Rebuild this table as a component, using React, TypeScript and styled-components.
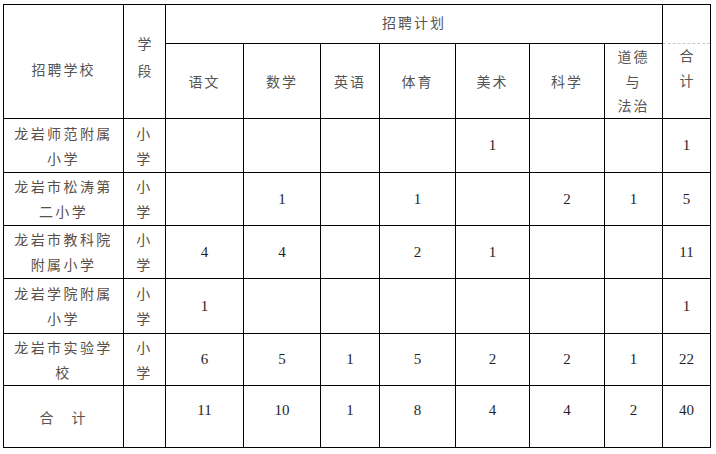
import React from 'react';
import styled, { createGlobalStyle } from 'styled-components';

const GlobalStyle = createGlobalStyle`
  html, body {
    margin: 0;
    padding: 0;
    background: #ffffff;
  }
`;

type Row = {
  school: string[];
  counts: (number | null)[];
  total: number;
};

const subjects = ['语文', '数学', '英语', '体育', '美术', '科学'];

const rows: Row[] = [
  { school: ['龙岩师范附属', '小学'], counts: [null, null, null, null, 1, null, null], total: 1 },
  { school: ['龙岩市松涛第', '二小学'], counts: [null, 1, null, 1, null, 2, 1], total: 5 },
  { school: ['龙岩市教科院', '附属小学'], counts: [4, 4, null, 2, 1, null, null], total: 11 },
  { school: ['龙岩学院附属', '小学'], counts: [1, null, null, null, null, null, null], total: 1 },
  { school: ['龙岩市实验学', '校'], counts: [6, 5, 1, 5, 2, 2, 1], total: 22 },
];

const sums = [11, 10, 1, 8, 4, 4, 2];

const colWidths = [120, 42, 78, 77, 59, 76, 74, 75, 58, 48];
const rowHeights = [54, 53, 53, 55, 52];

export default function App() {
  return (
    <>
      <GlobalStyle />
      <Page>
        <Table>
          <colgroup>
            {colWidths.map((w, i) => (
              <col key={i} style={{ width: w }} />
            ))}
          </colgroup>
          <thead>
            <PlanRow>
              <SchoolHead rowSpan={2}>招聘学校</SchoolHead>
              <StageHead rowSpan={2}>
                学<br />段
              </StageHead>
              <PlanCell colSpan={7}>招聘计划</PlanCell>
              <TotalHead rowSpan={2}>
                合<br />计
              </TotalHead>
            </PlanRow>
            <SubjectRow>
              {subjects.map((s) => (
                <SubjectCell key={s}>{s}</SubjectCell>
              ))}
              <SubjectCell $stack>
                道德<br />与<br />法治
              </SubjectCell>
            </SubjectRow>
          </thead>
          <tbody>
            {rows.map((r, i) => (
              <tr key={i} style={{ height: rowHeights[i] }}>
                <SchoolCell>
                  {r.school[0]}
                  <br />
                  {r.school[1]}
                </SchoolCell>
                <SchoolCell>
                  小<br />学
                </SchoolCell>
                {r.counts.map((c, j) => (
                  <NumCell key={j}>{c ?? ''}</NumCell>
                ))}
                <NumCell>{r.total}</NumCell>
              </tr>
            ))}
            <SumRow>
              <SumLabel>合　计</SumLabel>
              <SumLabel />
              {sums.map((s, j) => (
                <NumCell key={j} $lift>
                  {s}
                </NumCell>
              ))}
              <NumCell $lift>40</NumCell>
            </SumRow>
          </tbody>
        </Table>
      </Page>
    </>
  );
}

const Page = styled.div`
  padding: 4px 0 0 3px;
`;

const Table = styled.table`
  border-collapse: collapse;
  table-layout: fixed;
  width: 708px;

  td,
  th {
    border: 1px solid #000;
    padding: 0;
    text-align: center;
    vertical-align: middle;
    font-weight: normal;
    overflow: hidden;
  }
`;

const cjk = `"Noto Sans CJK SC", "Noto Sans", sans-serif`;

const PlanRow = styled.tr`
  height: 39px;
`;

const SubjectRow = styled.tr`
  height: 75px;
`;

const SchoolHead = styled.th`
  font-family: ${cjk};
  font-size: 14px;
  letter-spacing: 2px;
  line-height: 20px;
  color: #555;
  padding-top: 14px !important;
`;

const StageHead = styled.th`
  font-family: ${cjk};
  font-size: 14px;
  line-height: 27px;
  color: #555;
  padding-bottom: 9px !important;
`;

const PlanCell = styled.th`
  font-family: ${cjk};
  font-size: 14px;
  letter-spacing: 2px;
  line-height: 20px;
  color: #555;
  padding-bottom: 4px !important;
`;

const TotalHead = styled.th`
  position: relative;
  font-family: ${cjk};
  font-size: 14px;
  line-height: 25px;
  color: #555;
  padding-top: 12px !important;

  &::before {
    content: '';
    position: absolute;
    left: 0;
    right: 0;
    top: 38px;
    border-top: 1px dashed #c8c8c8;
  }
`;

const SubjectCell = styled.th<{ $stack?: boolean }>`
  font-family: ${cjk};
  font-size: 14px;
  letter-spacing: 2px;
  line-height: ${(p) => (p.$stack ? '24.5px' : '20px')};
  color: #555;
`;

const SchoolCell = styled.td`
  font-family: ${cjk};
  font-size: 14px;
  letter-spacing: 2.4px;
  line-height: 25px;
  color: #5a5048;
`;

const NumCell = styled.td<{ $lift?: boolean }>`
  font-family: 'Liberation Serif', 'DejaVu Serif', serif;
  font-size: 15px;
  color: #1f1f2a;
  padding-bottom: ${(p) => (p.$lift ? '12px' : '0')} !important;
`;

const SumRow = styled.tr`
  height: 62px;
`;

const SumLabel = styled.td`
  font-family: ${cjk};
  font-size: 14px;
  letter-spacing: 2px;
  color: #555;
`;
